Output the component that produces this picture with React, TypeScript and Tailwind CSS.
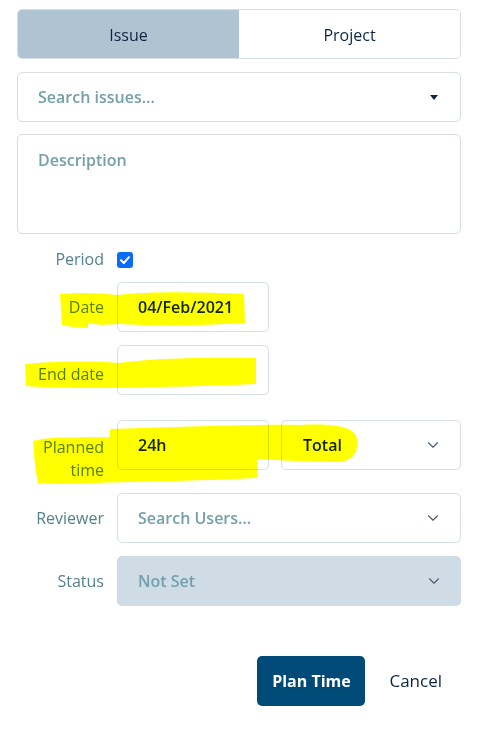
import React from 'react';
import { ChevronDown } from 'lucide-react';

const font = { fontFamily: '"Open Sans", "Noto Sans", sans-serif' };

const Row: React.FC<{ label: React.ReactNode; children: React.ReactNode; className?: string }> = ({ label, children, className }) => (
  <div className={`flex items-center gap-[13px] ${className ?? ''}`}>
    <div className="w-[87px] shrink-0 text-right text-[16px] leading-[23px] text-[#56808d]">{label}</div>
    <div className="flex flex-1 gap-[12px]">{children}</div>
  </div>
);

const Highlights: React.FC = () => (
  <svg className="pointer-events-none absolute left-0 top-0 mix-blend-multiply" width="482" height="736" viewBox="0 0 482 736">
    <g fill="#ffff00">
      <path d="M60 294 C80 292 100 293 118 295 C150 291 200 292 244 294 L245 323 C200 326 150 326 120 324 C105 325 92 325 88 323 L88 328 C80 328 70 327 62 325 Z" />
      <path d="M25 364 C60 361 95 361 118 363 C150 358 210 357 256 358 L256 384 C210 386 160 387 120 388 C80 388 50 388 26 386 Z" />
      <path d="M33 441 C50 436 80 438 110 437 L110 429 C170 427 260 424 300 425 C340 423 356 428 357 440 C358 452 354 460 340 462 C310 462 280 460 257 459 L257 478 C200 481 120 482 60 484 L38 483 C35 470 34 455 33 441 Z" />
    </g>
  </svg>
);

export default function App() {
  return (
    <div className="relative h-[736px] w-[482px] bg-white" style={font}>
      <div className="flex flex-col pl-[17px] pr-[21px] pt-[9px]">
        {/* Tabs */}
        <div className="flex h-[50px] overflow-hidden rounded-[5px] border border-[#d5dfe5]">
          <div className="flex flex-1 items-center justify-center bg-[#aec4d2] pt-[2px] text-[16px] text-[#0f2442]">Issue</div>
          <div className="flex flex-1 items-center justify-center bg-white pt-[2px] text-[16px] text-[#0f2442]">Project</div>
        </div>

        {/* Search issues */}
        <div className="mt-[13px] flex h-[50px] items-center justify-between rounded-[5px] border border-[#d5dfe5] pl-[20px] pr-[22px]">
          <span className="text-[16px] font-semibold text-[#74a0ab]">Search issues...</span>
          <svg width="8" height="5" viewBox="0 0 8 5">
            <path d="M0 0 H8 L4 5 Z" fill="#0f2442" />
          </svg>
        </div>

        {/* Description */}
        <div className="mt-[12px] h-[100px] rounded-[5px] border border-[#d5dfe5] px-[20px] pt-[13px]">
          <span className="text-[16px] font-semibold text-[#74a0ab]">Description</span>
        </div>

        {/* Period */}
        <Row label="Period" className="mt-[14px]">
          <div className="flex h-[16px] w-[16px] items-center justify-center rounded-[3px] bg-[#0b6cf5]">
            <svg width="10" height="8" viewBox="0 0 10 8">
              <path d="M1 4.2 L3.8 7 L9 1.2" fill="none" stroke="white" strokeWidth="2" strokeLinecap="round" strokeLinejoin="round" />
            </svg>
          </div>
        </Row>

        {/* Date */}
        <Row label="Date" className="mt-[11px]">
          <div className="flex h-[50px] w-[152px] items-center rounded-[5px] border border-[#d5dfe5] pl-[20px] text-[16px] font-semibold text-[#0f2442]">
            04/Feb/2021
          </div>
        </Row>

        {/* End date */}
        <Row label={<span className="relative top-[4px]">End date</span>} className="mt-[13px]">
          <div className="h-[50px] w-[152px] rounded-[5px] border border-[#d5dfe5]" />
        </Row>

        {/* Planned time */}
        <Row label={<span className="relative top-[16px] block leading-[23px]">Planned<br />time</span>} className="mt-[25px] items-start">
          <div className="flex h-[50px] w-[152px] items-center rounded-[5px] border border-[#d5dfe5] pl-[20px] text-[16px] font-semibold text-[#0f2442]">
            24h
          </div>
          <div className="flex h-[50px] flex-1 items-center justify-between rounded-[5px] border border-[#d5dfe5] pl-[21px] pr-[18px] text-[16px] font-semibold text-[#0f2442]">
            Total
            <ChevronDown className="h-[18px] w-[18px] text-[#4b5d73]" strokeWidth={1.5} />
          </div>
        </Row>

        {/* Reviewer */}
        <Row label="Reviewer" className="mt-[23px]">
          <div className="flex h-[50px] flex-1 items-center justify-between rounded-[5px] border border-[#d5dfe5] pl-[20px] pr-[18px]">
            <span className="text-[16px] font-semibold text-[#74a0ab]">Search Users...</span>
            <ChevronDown className="h-[18px] w-[18px] text-[#4b5d73]" strokeWidth={1.5} />
          </div>
        </Row>

        {/* Status */}
        <Row label="Status" className="mt-[13px]">
          <div className="flex h-[50px] flex-1 items-center justify-between rounded-[5px] bg-[#cfdce5] pl-[21px] pr-[18px]">
            <span className="text-[16px] font-semibold text-[#74a0ab]">Not Set</span>
            <ChevronDown className="h-[18px] w-[18px] text-[#4b5d73]" strokeWidth={1.5} />
          </div>
        </Row>

        {/* Actions */}
        <div className="mt-[50px] flex items-center justify-end gap-[24px] pr-[19px]">
          <button className="h-[50px] w-[108px] rounded-[5px] bg-[#004a77] text-[16px] font-bold text-white">Plan Time</button>
          <button className="text-[17px] text-[#0f2442]">Cancel</button>
        </div>
      </div>
      <Highlights />
    </div>
  );
}
